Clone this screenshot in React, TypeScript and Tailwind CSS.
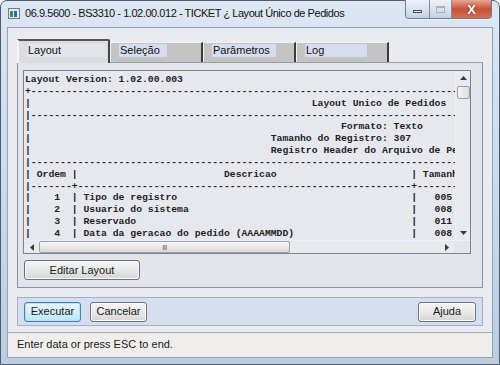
import React from 'react';

const ui = { fontFamily: '"Liberation Sans", Arial, sans-serif' };
const mono = { fontFamily: '"Liberation Mono", "Courier New", monospace' };

const dash = (n: number) => '-'.repeat(n);
const at = (s: string, col: number) => s.padEnd(col, ' ');

const itens: [string, string, string][] = [
  ['1', 'Tipo de registro', '005'],
  ['2', 'Usuario do sistema', '008'],
  ['3', 'Reservado', '011'],
  ['4', 'Data da geracao do pedido (AAAAMMDD)', '008'],
];

const linhas: string[] = [
  'Layout Version: 1.02.00.003',
  '+' + dash(99),
  at('|', 49) + 'Layout Unico de Pedidos',
  '|' + dash(99),
  at('|', 54) + 'Formato: Texto',
  at('|', 42) + 'Tamanho do Registro: 307',
  at('|', 42) + 'Registro Header do Arquivo de Pedidos',
  '|' + dash(99),
  at(at('| Ordem |', 34) + 'Descricao', 66) + '| Tamanho |',
  '|-------+' + dash(57) + '+' + dash(30),
  ...itens.map(([n, d, t]) => at(at('|    ' + n + '  | ' + d, 66) + '|   ' + t, 80)),
];

function Tab({ label, labelW, active }: { label: string; labelW: number; active?: boolean }) {
  return (
    <div
      className={
        active
          ? 'relative z-10 -mb-px w-[93px] h-[24px] bg-[#dcdde2] border-t-2 border-l-2 border-r-2 border-t-[#555] border-l-[#f4f4f4] border-r-[#444] rounded-tr-[2px] pl-[8px] pt-[3px]'
          : 'w-[93px] h-[20px] bg-[#c4c4c4] border-t border-l border-r-2 border-t-[#f2f2f2] border-l-[#f2f2f2] border-r-[#3a3a3a] pl-[8px] pt-[1px]'
      }
    >
      <div
        className={(active ? 'bg-[#e4e6ec]' : 'bg-[#d6ddf0]') + ' h-[13px] text-[11px] leading-[13px] text-[#111] pl-[1px]'}
        style={{ width: labelW }}
      >
        {label}
      </div>
    </div>
  );
}

function Btn({ children, w, def }: { children: React.ReactNode; w: number; def?: boolean }) {
  return (
    <div
      className={
        'h-[20px] flex items-center justify-center rounded-[3px] text-[11px] text-[#1a1a1a] bg-gradient-to-b ' +
        (def
          ? 'border border-[#3c7fb1] from-[#eaf6fd] to-[#bee6fd] shadow-[inset_0_0_0_1px_#b6e3fa]'
          : 'border border-[#707070] from-[#f4f4f4] via-[#e8e8e8] to-[#d6d6d6] shadow-[inset_0_0_0_1px_#fbfbfb]')
      }
      style={{ width: w }}
    >
      {children}
    </div>
  );
}

function Tri({ dir }: { dir: 'up' | 'down' | 'left' | 'right' }) {
  const pts = {
    up: '0,4 3.5,0 7,4',
    down: '0,0 3.5,4 7,0',
    left: '4,0 0,3.5 4,7',
    right: '0,0 4,3.5 0,7',
  }[dir];
  const vert = dir === 'up' || dir === 'down';
  return (
    <svg width={vert ? 7 : 4} height={vert ? 4 : 7} viewBox={vert ? '0 0 7 4' : '0 0 4 7'}>
      <polygon points={pts} fill="#3a3a3a" />
    </svg>
  );
}

export default function App() {
  return (
    <div className="w-[500px] h-[365px] overflow-hidden bg-white">
      <div
        className="w-[500px] h-[365px] flex flex-col rounded-t-[7px] border border-[#4d5d70] bg-gradient-to-b from-[#dde7f2] via-[#cbd9ea] to-[#bccde2]"
        style={ui}
      >
        {/* barra de titulo */}
        <div className="h-[26px] flex items-start shrink-0">
          <div className="ml-[7px] mt-[7px] w-[12px] h-[11px] border border-[#6a7b8e] bg-[#e8eef5] flex items-center gap-[1px] px-[1px]">
            <div className="w-[3px] h-[6px] bg-[#3c8f3c]" />
            <div className="w-[3px] h-[6px] bg-[#2f64b5]" />
          </div>
          <div className="ml-[5px] mt-[5px] text-[11px] leading-[14px] text-[#111] tracking-[-0.45px]">
            06.9.5600 - BS3310 - 1.02.00.012 - TICKET ¿ Layout Único de Pedidos
          </div>
          <div className="ml-auto mr-[7px] -mt-px flex h-[19px] rounded-b-[4px] border border-t-0 border-[#6b7c90] overflow-hidden shadow-[0_1px_0_#eef3f8]">
            <div className="w-[24px] bg-gradient-to-b from-[#eef3f9] via-[#d9e3ee] to-[#c3d1e2] flex items-center justify-center border-r border-[#7d8ea2]">
              <div className="w-[9px] h-[3px] bg-white border border-[#3e4c5d] mt-[4px]" />
            </div>
            <div className="w-[22px] bg-gradient-to-b from-[#eef3f9] via-[#d9e3ee] to-[#c3d1e2] flex items-center justify-center border-r border-[#7d8ea2]">
              <div className="w-[9px] h-[7px] border border-[#8d9cae] border-t-2 opacity-70" />
            </div>
            <div className="w-[39px] bg-gradient-to-b from-[#e8a493] via-[#c7503a] to-[#d2704f] flex items-center justify-center">
              <span className="text-white text-[13px] font-bold leading-none" style={{ textShadow: '0 0 2px #5a1a10' }}>
                X
              </span>
            </div>
          </div>
        </div>

        {/* area cliente */}
        <div className="mx-[6px] h-[331px] border border-[#8fa3b9] bg-[#e9ebf0] flex flex-col shrink-0">
          <div className="pt-[11px] px-[9px]">
            <div className="flex items-end h-[23px]">
              <Tab label="Layout" labelW={78} active />
              <Tab label="Seleção" labelW={48} />
              <Tab label="Parâmetros" labelW={64} />
              <Tab label="Log" labelW={62} />
            </div>

            {/* painel da aba */}
            <div className="h-[226px] border border-[#8a8f99] border-t-[#9a9ea6] bg-[#e3e5ec] pl-[5px] pt-[7px]">
              <div className="w-[448px] h-[184px] border border-[#7d838d] bg-[#e6e8ee] flex flex-col">
                <div className="flex h-[169px]">
                  <pre
                    className="w-[431px] h-[169px] overflow-hidden pl-[1px] pt-[3px] text-[9.75px] leading-[11.85px] font-bold text-[#1e1e1e] whitespace-pre"
                    style={mono}
                  >
                    {linhas.join('\n')}
                  </pre>
                  <div className="w-[15px] bg-[#e9eaee] flex flex-col items-center border-l border-[#eef0f3]">
                    <div className="h-[14px] flex items-center justify-center">
                      <Tri dir="up" />
                    </div>
                    <div className="w-[13px] h-[13px] mt-[1px] rounded-[2px] border border-[#9aa0a8] bg-gradient-to-r from-[#f6f6f6] to-[#dcdcdc]" />
                    <div className="flex-1" />
                    <div className="h-[14px] flex items-center justify-center">
                      <Tri dir="down" />
                    </div>
                  </div>
                </div>
                <div className="flex h-[13px] bg-[#e9eaee] border-t border-[#eef0f3]">
                  <div className="w-[15px] flex items-center justify-center">
                    <Tri dir="left" />
                  </div>
                  <div className="w-[251px] h-[12px] rounded-[2px] border border-[#9aa0a8] bg-gradient-to-b from-[#f8f8f8] to-[#d8d8d8] flex items-center justify-center">
                    <span className="text-[7px] leading-none text-[#555] tracking-[-0.5px]">III</span>
                  </div>
                  <div className="flex-1" />
                  <div className="w-[15px] flex items-center justify-center">
                    <Tri dir="right" />
                  </div>
                  <div className="w-[16px] bg-[#e3e5ec]" />
                </div>
              </div>
              <div className="mt-[6px] ml-px">
                <Btn w={116}>Editar Layout</Btn>
              </div>
            </div>
          </div>

          {/* barra de botoes */}
          <div className="mt-[9px] mx-[9px] h-[29px] border border-[#a3b0c2] bg-[#d5deee] flex items-center pl-[6px] pr-[6px] gap-[9px]">
            <Btn w={57} def>
              Executar
            </Btn>
            <Btn w={57}>Cancelar</Btn>
            <div className="flex-1" />
            <Btn w={58}>Ajuda</Btn>
          </div>

          {/* status */}
          <div className="mt-[6px] flex-1 border-t border-[#a9adb4] bg-[#f0eeec] pl-[9px] pt-[3px] text-[11px] leading-[16px] text-[#1a1a1a]">
            Enter data or press ESC to end.
          </div>
        </div>
      </div>
    </div>
  );
}
